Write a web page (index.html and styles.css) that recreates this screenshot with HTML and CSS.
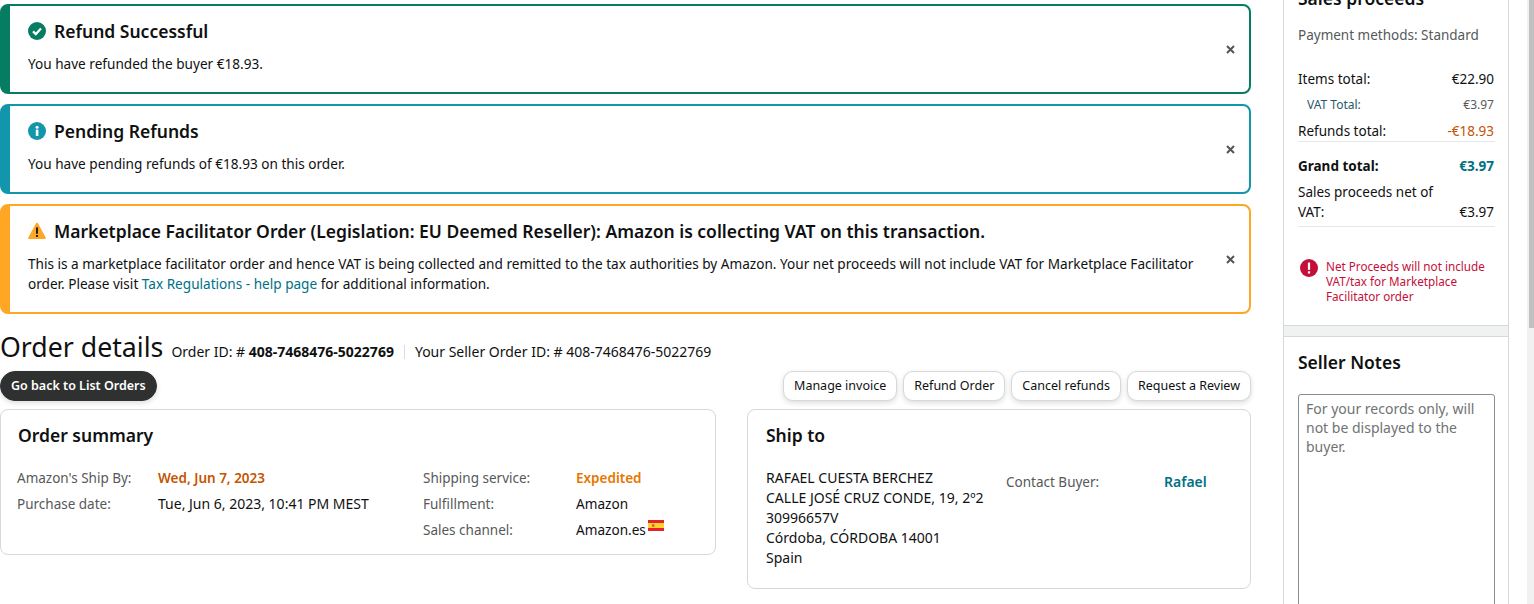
FILE: index.html
```html
<!DOCTYPE html>
<html lang="en">
<head>
    <meta charset="UTF-8">
    <title>Order details</title>
    <link rel="stylesheet" href="styles.css">
</head>
<body>
    <div class="page">
        <main class="main">
            <div class="alert alert-success">
                <div class="alert-body">
                    <h4 class="alert-title">
                        <svg class="alert-icon" viewBox="0 0 18 18"><circle cx="9" cy="9" r="9" fill="#067d62"/><path d="M5 9.4l2.800 2.700L13 6.600" fill="none" stroke="#fff" stroke-width="2.200"/></svg>
                        Refund Successful
                    </h4>
                    <p>You have refunded the buyer €18.93.</p>
                </div>
                <svg class="alert-close" viewBox="0 0 9 9"><path d="M1 1l7 7M8 1l-7 7"/></svg>
            </div>
            <div class="alert alert-info">
                <div class="alert-body">
                    <h4 class="alert-title">
                        <svg class="alert-icon" viewBox="0 0 18 18"><circle cx="9" cy="9" r="9" fill="#1196ab"/><rect x="7.800" y="7.600" width="2.600" height="6.400" fill="#fff"/><circle cx="9.100" cy="5.200" r="1.500" fill="#fff"/></svg>
                        Pending Refunds
                    </h4>
                    <p>You have pending refunds of €18.93 on this order.</p>
                </div>
                <svg class="alert-close" viewBox="0 0 9 9"><path d="M1 1l7 7M8 1l-7 7"/></svg>
            </div>
            <div class="alert alert-warning">
                <div class="alert-body">
                    <h4 class="alert-title">
                        <svg class="alert-icon" viewBox="0 0 18 18"><path d="M9 .8c.5 0 .9.3 1.100.7l7.600 14c.4.7-.1 1.600-.9 1.600H1.200c-.8 0-1.300-.9-.9-1.600l7.600-14c.2-.4.6-.7 1.100-.7z" fill="#ffa724"/><rect x="8" y="5.400" width="2" height="6.400" fill="#222"/><rect x="8" y="13" width="2" height="2" fill="#222"/></svg>
                        Marketplace Facilitator Order (Legislation: EU Deemed Reseller): Amazon is collecting VAT on this transaction.
                    </h4>
                    <p>This is a marketplace facilitator order and hence VAT is being collected and remitted to the tax authorities by Amazon. Your net proceeds will not include VAT for Marketplace Facilitator order. Please visit <a href="#">Tax Regulations - help page</a> for additional information.</p>
                </div>
                <svg class="alert-close" viewBox="0 0 9 9"><path d="M1 1l7 7M8 1l-7 7"/></svg>
            </div>

            <div class="order-head">
                <h1>Order details</h1>
                <span class="order-id">Order ID: # <b>408-7468476-5022769</b></span>
                <span class="order-id order-id-seller">Your Seller Order ID: # 408-7468476-5022769</span>
            </div>

            <div class="actions">
                <button class="btn btn-dark">Go back to List Orders</button>
                <div class="actions-right">
                    <button class="btn">Manage invoice</button>
                    <button class="btn">Refund Order</button>
                    <button class="btn">Cancel refunds</button>
                    <button class="btn">Request a Review</button>
                </div>
            </div>

            <div class="cards">
                <section class="card card-summary">
                    <h3>Order summary</h3>
                    <div class="summary-cols">
                        <div class="info-grid info-left">
                            <span class="label">Amazon's Ship By:</span><b class="ship-by">Wed, Jun 7, 2023</b>
                            <span class="label">Purchase date:</span><span class="value">Tue, Jun 6, 2023, 10:41 PM MEST</span>
                        </div>
                        <div class="info-grid info-right">
                            <span class="label">Shipping service:</span><b class="expedited">Expedited</b>
                            <span class="label">Fulfillment:</span><span class="channel">Amazon</span>
                            <span class="label">Sales channel:</span>
                            <span class="channel">Amazon.es
                                <svg class="flag" viewBox="0 0 16 11"><rect width="16" height="11" fill="#e8212b"/><rect y="3" width="16" height="5" fill="#fbd22e"/><rect x="4" y="4.300" width="2.400" height="2.400" fill="#c9603a"/></svg>
                            </span>
                        </div>
                    </div>
                </section>
                <section class="card card-ship">
                    <h3>Ship to</h3>
                    <div class="ship-cols">
                        <address>RAFAEL CUESTA BERCHEZ<br>CALLE JOSÉ CRUZ CONDE, 19, 2º2<br>30996657V<br>Córdoba, CÓRDOBA 14001<br>Spain</address>
                        <span class="label contact">Contact Buyer:</span>
                        <b class="buyer">Rafael</b>
                    </div>
                </section>
            </div>
        </main>

        <aside class="side">
            <section class="side-box proceeds">
                <h3>Sales proceeds</h3>
                <p class="label pay">Payment methods: Standard</p>
                <div class="row"><span>Items total:</span><span>€22.90</span></div>
                <div class="row row-small"><span>VAT Total:</span><span>€3.97</span></div>
                <div class="row row-line"><span>Refunds total:</span><span class="neg">-€18.93</span></div>
                <div class="row row-grand"><b>Grand total:</b><b class="grand">€3.97</b></div>
                <div class="row row-net row-line"><span class="net-label">Sales proceeds net of VAT:</span><span>€3.97</span></div>
                <div class="net-error">
                    <svg class="error-icon" viewBox="0 0 18 18"><circle cx="9" cy="9" r="9" fill="#c40f39"/><rect x="7.900" y="3.600" width="2.200" height="7.200" fill="#fff"/><rect x="7.900" y="12.300" width="2.200" height="2.200" fill="#fff"/></svg>
                    <span>Net Proceeds will not include VAT/tax for Marketplace Facilitator order</span>
                </div>
            </section>
            <section class="side-box notes">
                <h3>Seller Notes</h3>
                <textarea class="notes-input" placeholder="For your records only, will not be displayed to the buyer."></textarea>
            </section>
        </aside>

        <div class="scrollbar"><div class="scrollbar-thumb"></div></div>
    </div>
</body>
</html>
```

FILE: styles.css
```css
html, body {
    margin: 0;
    height: 604px;
    overflow: hidden;
    background: #fff;
}

body {
    font-family: "Noto Sans", Arial, sans-serif;
    font-size: 13.5px;
    line-height: 20px;
    color: #0f1111;
}

.page {
    display: flex;
    height: 604px;
    overflow: hidden;
}

.main {
    width: 1251px;
    padding-top: 4px;
    flex-shrink: 0;
}

/* alerts */
.alert {
    display: flex;
    justify-content: space-between;
    align-items: center;
    box-sizing: border-box;
    border: 2px solid;
    border-left-width: 10px;
    border-radius: 8px;
    margin-bottom: 10px;
    padding: 13px 14px 18px 18px;
}

.alert-success { border-color: #067d62; }
.alert-info { border-color: #1196ab; }
.alert-warning { border-color: #ffa724; margin-bottom: 0; }

.alert-title {
    display: flex;
    align-items: center;
    gap: 8px;
    margin: 0 0 11px;
    font-size: 17.5px;
    line-height: 24px;
    font-weight: 600;
}

.alert-icon {
    width: 18px;
    height: 18px;
    flex-shrink: 0;
}

.alert p {
    margin: 0;
    font-size: 13.6px;
}

.alert a, .buyer {
    color: #007185;
    text-decoration: none;
}

.alert-close {
    width: 9px;
    height: 9px;
    margin: 5px 0 0 20px;
    flex-shrink: 0;
    fill: none;
    stroke: #555;
    stroke-width: 2;
}

/* heading */
.order-head {
    display: flex;
    align-items: baseline;
    margin-top: 15px;
    height: 40px;
}

.order-head h1 {
    margin: 0 8px 0 0;
    font-size: 26.7px;
    line-height: 36px;
    font-weight: 400;
}

.order-id {
    font-size: 14px;
    line-height: 14px;
}

.order-id-seller {
    margin-left: 10px;
    padding-left: 10px;
    border-left: 1px solid #ddd;
}

/* buttons */
.actions {
    display: flex;
    justify-content: space-between;
    margin-top: 2px;
}

.actions-right {
    display: flex;
    gap: 6px;
}

.btn {
    font: inherit;
    font-size: 12.5px;
    height: 30px;
    padding: 0 10px;
    background: #fff;
    color: #0f1111;
    border: 1px solid #d5d9d9;
    border-radius: 10px;
    box-shadow: 0 2px 5px rgba(15, 17, 17, 0.15);
}

.btn-dark {
    background: #2f3131;
    color: #fff;
    font-weight: 600;
    border-color: #2f3131;
    border-radius: 15px;
}

/* cards */
.cards {
    display: flex;
    justify-content: space-between;
    align-items: flex-start;
    margin-top: 8px;
}

.card {
    box-sizing: border-box;
    border: 1px solid #d5d9d9;
    border-radius: 8px;
    padding: 13px 17px;
}

.card h3, .side-box h3 {
    margin: 0;
    font-size: 17.500px;
    line-height: 24px;
    font-weight: 600;
}

.card-summary {
    width: 716px;
    height: 146px;
    padding-left: 16px;
}

.card-summary h3 {
    margin-left: 1px;
}

.card-ship {
    width: 504px;
    height: 180px;
    padding-left: 18px;
}

.summary-cols {
    display: flex;
    margin-top: 21px;
}

.info-grid {
    display: grid;
    row-gap: 6px;
    align-content: start;
}

.info-left {
    grid-template-columns: 141px auto;
    width: 406px;
    flex-shrink: 0;
}

.info-right {
    grid-template-columns: 153px auto;
}

.label {
    color: #565959;
}

.value, address, .buyer {
    font-size: 14px;
}

.ship-by { color: #c45500; font-weight: 600; }
.expedited { color: #e77600; font-weight: 600; }

.channel {
    display: flex;
    gap: 2px;
    font-size: 13.6px;
}

.flag {
    width: 16px;
    height: 11px;
}

.ship-cols {
    display: flex;
    margin-top: 21px;
}

address {
    font-style: normal;
    width: 240px;
    flex-shrink: 0;
}

.contact {
    width: 158px;
    margin-top: 4px;
}

.buyer {
    margin-top: 4px;
    font-weight: 600;
}

/* right column */
.side {
    box-sizing: border-box;
    width: 226px;
    margin-left: 32px;
    height: 640px;
    margin-top: -14px;
    flex-shrink: 0;
    background: #f0f2f2;
    border: 1px solid #d5d9d9;
    border-top: 0;
}

.side-box {
    background: #fff;
    padding: 0 13px 0 14px;
}

.proceeds {
    height: 340px;
    box-sizing: border-box;
    border-bottom: 1px solid #d5d9d9;
}

.pay {
    margin: 15px 0 24px;
}

.row {
    display: flex;
    justify-content: space-between;
    align-items: flex-end;
    margin-bottom: 6px;
    padding-right: 1px;
}

.row-small {
    padding-left: 9px;
    font-size: 12px;
    color: #565959;
}

.row-small span:first-child { color: #2a5a6a; }

.row-line {
    border-bottom: 1px solid #e7e7e7;
}

.neg { color: #c45500; }
.grand { color: #007185; }

.row-grand {
    margin-top: 14px;
}

.row-net {
    margin-bottom: 0;
    padding-bottom: 4px;
}

.net-label {
    width: 150px;
}

.net-error {
    display: flex;
    gap: 8px;
    margin-top: 32px;
    font-size: 11.700px;
    line-height: 15px;
    color: #c40f39;
}

.error-icon {
    width: 18px;
    height: 18px;
    flex-shrink: 0;
    margin-left: 2px;
}

.notes {
    margin-top: 10px;
    height: 300px;
    box-sizing: border-box;
    border-top: 1px solid #d5d9d9;
    padding-top: 13px;
}

.notes-input {
    display: block;
    box-sizing: border-box;
    width: 197px;
    height: 260px;
    margin-top: 20px;
    padding: 4px 7px;
    font: inherit;
    font-size: 14px;
    line-height: 19px;
    border: 1px solid #888c8c;
    border-radius: 3px;
    resize: none;
}

.notes-input::placeholder {
    color: #6f7373;
    opacity: 1;
}

/* fake window scrollbar */
.scrollbar {
    width: 7px;
    margin-left: auto;
    background: #f1f1f1;
}

.scrollbar-thumb {
    height: 328px;
    margin-left: 2px;
    background: #c1c1c1;
}
```
